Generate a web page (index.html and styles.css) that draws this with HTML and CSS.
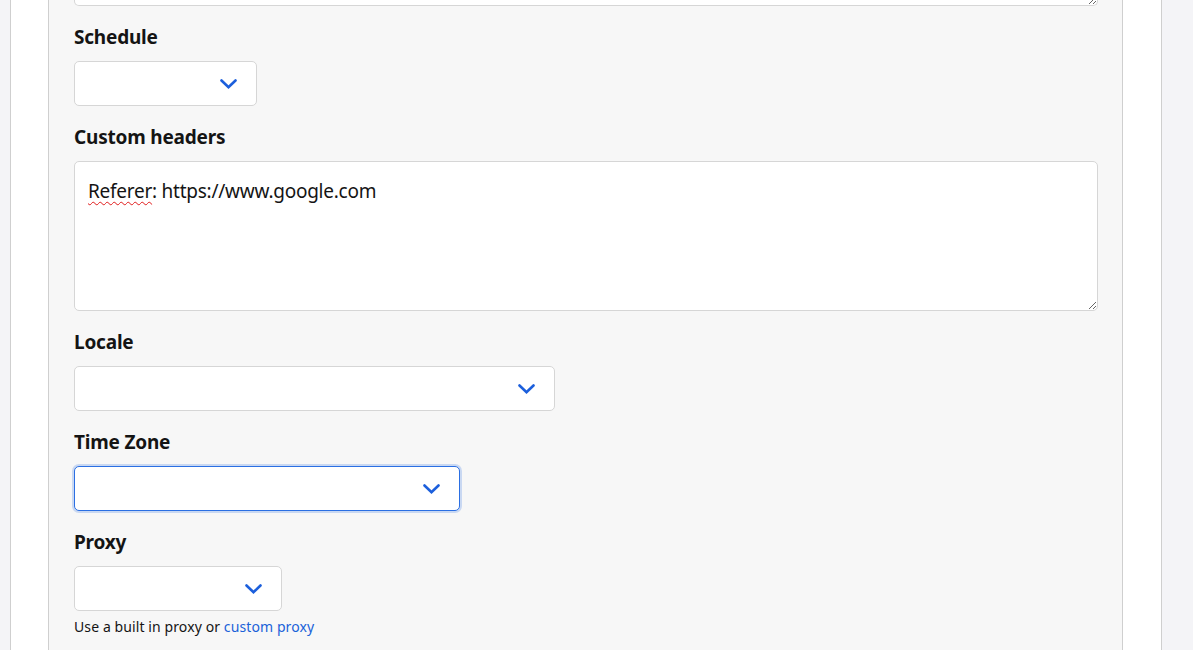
FILE: index.html
```html
<!DOCTYPE html>
<html lang="en">
<head>
<meta charset="utf-8">
<title>Settings</title>
<link rel="stylesheet" href="styles.css">
</head>
<body>
<div class="page">
  <div class="edge-left"></div>
  <div class="gutter-left"></div>
  <main class="panel">
    <div class="top-area"></div>

    <div class="field">
      <label class="label">Schedule</label>
      <div class="select w-schedule">
        <svg class="chev" width="17" height="10" viewBox="0 0 17 10"><path d="M1.5 1.5 L8.5 8.2 L15.5 1.5" /></svg>
      </div>
    </div>

    <div class="field">
      <label class="label">Custom headers</label>
      <div class="textarea"><span class="misspelt">Referer</span>: https://www.google.com</div>
    </div>

    <div class="field">
      <label class="label">Locale</label>
      <div class="select w-locale">
        <svg class="chev" width="17" height="10" viewBox="0 0 17 10"><path d="M1.5 1.5 L8.5 8.2 L15.5 1.5" /></svg>
      </div>
    </div>

    <div class="field">
      <label class="label">Time Zone</label>
      <div class="select w-tz is-focused">
        <svg class="chev" width="17" height="10" viewBox="0 0 17 10"><path d="M1.5 1.5 L8.5 8.2 L15.5 1.5" /></svg>
      </div>
    </div>

    <div class="field">
      <label class="label">Proxy</label>
      <div class="select w-proxy">
        <svg class="chev" width="17" height="10" viewBox="0 0 17 10"><path d="M1.5 1.5 L8.5 8.2 L15.5 1.5" /></svg>
      </div>
      <p class="help">Use a built in proxy or <a href="#" class="link">custom proxy</a></p>
    </div>
  </main>
  <div class="gutter-right"></div>
  <div class="edge-right"></div>
</div>
</body>
</html>
```

FILE: styles.css
```css
html, body {
  margin: 0;
  padding: 0;
  height: 100%;
  overflow: hidden;
}

body {
  font-family: "Noto Sans", "Open Sans", Arial, sans-serif;
  color: #141414;
  background: #f4f4f7;
}

.page {
  display: flex;
  height: 650px;
}

.edge-left {
  width: 10px;
  background: #f4f4f7;
  border-right: 1px solid #cfcfcf;
}

.gutter-left {
  width: 37px;
  background: #ffffff;
  border-right: 1px solid #cfcfcf;
}

.panel {
  width: 1024px;
  padding: 0 24px 0 25px;
  background: #f7f7f7;
  border-right: 1px solid #cfcfcf;
  display: flex;
  flex-direction: column;
  gap: 19px;
}

.gutter-right {
  width: 38px;
  background: #ffffff;
  border-right: 1px solid #cfcfcf;
}

.edge-right {
  flex: 1;
  background: #f4f4f7;
}

.top-area {
  height: 5px;
  background: #ffffff;
  border: 1px solid #d6d6d6;
  border-top: none;
  border-radius: 0 0 5px 5px;
  resize: both;
  overflow: auto;
}

.field {
  display: flex;
  flex-direction: column;
  align-items: flex-start;
}

.label {
  font-size: 19px;
  font-weight: 700;
  line-height: 24px;
  margin-bottom: 12px;
  letter-spacing: -0.2px;
}

.select {
  box-sizing: border-box;
  height: 45px;
  background: #ffffff;
  border: 1px solid #d6d6d6;
  border-radius: 5px;
  display: flex;
  align-items: center;
  justify-content: flex-end;
  padding-right: 19px;
}

.select.is-focused {
  border-color: #2b6fe3;
  box-shadow: 0 0 0 2px rgba(43, 111, 227, 0.22);
}

.w-schedule { width: 183px; }
.w-locale { width: 481px; }
.w-tz { width: 386px; }
.w-proxy { width: 208px; }

.chev path {
  fill: none;
  stroke: #1c5fdc;
  stroke-width: 2.6;
  stroke-linecap: round;
  stroke-linejoin: miter;
}

.textarea {
  box-sizing: border-box;
  width: 1024px;
  height: 150px;
  background: #ffffff;
  border: 1px solid #d6d6d6;
  border-radius: 5px;
  padding: 15px 13px 13px;
  font-size: 19px;
  line-height: 28px;
  color: #141414;
  resize: both;
  overflow: auto;
  letter-spacing: -0.25px;
}

.misspelt {
  text-decoration: underline wavy #e01b1b;
  text-decoration-thickness: 1px;
  text-underline-offset: 3px;
}

.help {
  margin: 6px 0 0;
  font-size: 14px;
  line-height: 20px;
  letter-spacing: 0.1px;
}

.link {
  color: #1a62d9;
  text-decoration: none;
}
```
